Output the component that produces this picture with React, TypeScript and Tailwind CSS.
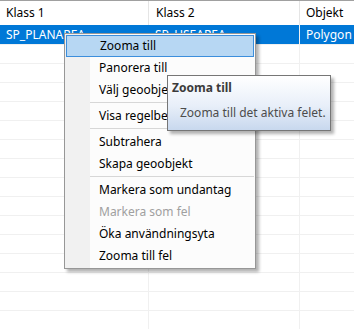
import React from "react";

const items: { label: string; sep?: boolean; disabled?: boolean; active?: boolean }[] = [
  { label: "Zooma till", active: true },
  { label: "Panorera till" },
  { label: "Välj geoobjekt" },
  { label: "", sep: true },
  { label: "Visa regelbeskrivning" },
  { label: "", sep: true },
  { label: "Subtrahera" },
  { label: "Skapa geoobjekt" },
  { label: "", sep: true },
  { label: "Markera som undantag" },
  { label: "Markera som fel", disabled: true },
  { label: "Öka användningsyta" },
  { label: "Zooma till fel" },
];

export default function App() {
  const rows = Array.from({ length: 15 });
  return (
    <div
      className="relative w-[354px] h-[330px] overflow-hidden bg-white text-[12px] text-black"
      style={{ fontFamily: '"Noto Sans", "Open Sans", sans-serif' }}
    >
      {/* header */}
      <div className="flex h-[25px] border-t border-[#a0a0a0] items-center">
        <div className="w-[149px] h-full border-r border-[#e5e5e5] pl-[6px] flex items-center">Klass 1</div>
        <div className="w-[151px] h-full border-r border-[#e5e5e5] pl-[7px] flex items-center">Klass 2</div>
        <div className="flex-1 h-full pl-[6px] flex items-center">Objekt</div>
      </div>
      {/* selected row */}
      <div className="flex h-[19px] bg-[#0078d7] text-white">
        <div className="w-[149px] h-full border-r border-[#0078d7] pl-[6px] flex items-center">SP_PLANAREA</div>
        <div className="w-[151px] h-full border-r border-[#f0f0f0] pl-[6px] flex items-center">SP_USEAREA</div>
        <div className="flex-1 h-full pl-[6px] flex items-center">Polygon</div>
      </div>
      {rows.map((_, i) => (
        <div key={i} className="flex h-[19px] border-t border-[#f0f0f0]">
          <div className="w-[149px] h-full border-r border-[#f0f0f0]" />
          <div className="w-[151px] h-full border-r border-[#f0f0f0]" />
          <div className="flex-1 h-full" />
        </div>
      ))}

      {/* context menu */}
      <div className="absolute left-[64px] top-[33px] w-[192px] border border-[#979797] p-[1px] bg-[linear-gradient(to_right,#f1f1f1_25px,#fcfcfc_25px)] shadow-[3px_3px_3px_rgba(0,0,0,0.3)]">
        {items.map((it, i) =>
          it.sep ? (
            <div key={i} className="h-[3px] pl-[24px]">
              <div className="mt-[1px] h-px bg-[#d7d7d7]" />
            </div>
          ) : (
            <div
              key={i}
              className={
                "h-[22px] flex items-center pl-[33px] " +
                (it.active ? "bg-[#b7d7f3] border border-[#3c8edc] pl-[32px] " : "") +
                (it.disabled ? "text-[#a0a0a0]" : "text-black")
              }
            >
              {it.label}
            </div>
          )
        )}
      </div>

      {/* tooltip */}
      <div className="absolute left-[167px] top-[75px] w-[164px] h-[56px] border border-[#767676] bg-[linear-gradient(to_bottom,#ffffff,#e8eff9_55%,#c8d8ee)] shadow-[3px_3px_3px_rgba(0,0,0,0.3)] text-[#4c4c4c]">
        <div className="pl-[4px] pt-[3px] font-bold text-[#3b3b3b] leading-[18px]">Zooma till</div>
        <div className="pl-[12px] pt-[7px] leading-[18px]">Zooma till det aktiva felet.</div>
      </div>
    </div>
  );
}
